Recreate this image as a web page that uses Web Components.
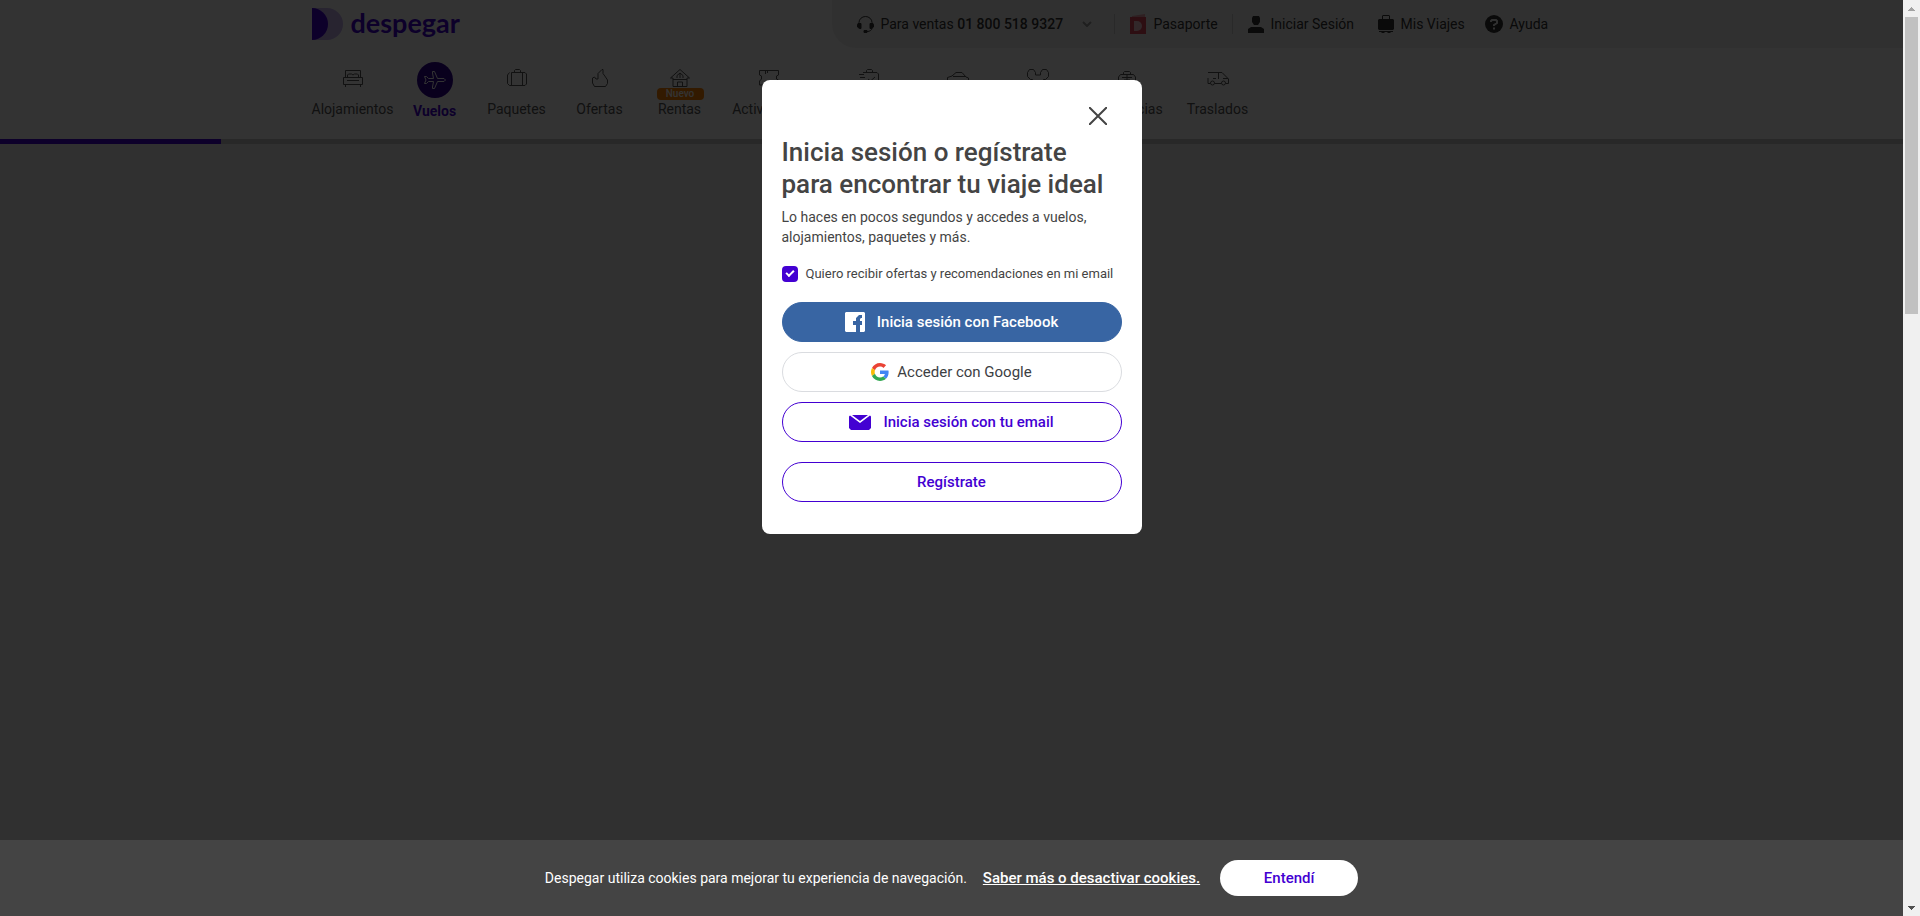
<!DOCTYPE html>
<html lang="es">
<head>
<meta charset="utf-8">
<title>Despegar - Vuelos</title>
<style>
  html, body { margin: 0; }
  body { font-family: Roboto, "Liberation Sans", sans-serif; font-size: 14px; line-height: 20px; color: #444; background: #f0f0f0; }
</style>
</head>
<body>
<app-window>
  <site-header>
    <site-brand slot="brand"></site-brand>
    <utility-bar slot="utility"></utility-bar>
    <product-nav slot="nav"></product-nav>
  </site-header>
  <login-dialog slot="dialog"></login-dialog>
  <cookie-bar slot="footer"></cookie-bar>
</app-window>

<script>
const BASE = `:host, *, *::before { box-sizing: border-box; } a { color: inherit; text-decoration: none; } button { font: inherit; color: inherit; cursor: pointer; margin: 0; padding: 0; border: 0; background: none; } svg { display: block; flex: none; }`;

function define(name, css, html) {
  const template = document.createElement('template');
  template.innerHTML = `<style>${BASE}${css}</style>${html}`;
  customElements.define(name, class extends HTMLElement {
    constructor() {
      super();
      this.attachShadow({ mode: 'open' }).append(template.content.cloneNode(true));
    }
  });
}

const line = (w, h, body) => `<svg width="${w}" height="${h}" viewBox="0 0 ${w} ${h}" fill="none" stroke="currentColor" stroke-width="1" aria-hidden="true">${body}</svg>`;
const solid = (w, h, body) => `<svg width="${w}" height="${h}" viewBox="0 0 ${w} ${h}" fill="currentColor" aria-hidden="true">${body}</svg>`;

define('scroll-rail', `
  :host { display: flex; flex-direction: column; align-items: center; width: 17px; height: 100vh; position: sticky; top: 0; background: #f0f0f0; }
  .end { display: grid; place-items: center; height: 17px; width: 17px; }
  .thumb { flex: 297; width: 13px; background: #c1c1c1; }
  .rest { flex: 585; }
`, `
  <div class="end">${solid(7, 4, '<path fill="#a3a3a3" d="M3 0h1v1h1v1h1v1h1v1H0V3h1V2h1V1h1z"/>')}</div>
  <div class="thumb"></div><div class="rest"></div>
  <div class="end">${solid(7, 4, '<path fill="#505050" d="M0 0h7v1H6v1H5v1H4v1H3V3H2V2H1V1H0z"/>')}</div>
`);

define('app-window', `
  :host { display: flex; min-height: 100vh; }
  .view { flex: 1; display: flex; flex-direction: column; min-width: 0; }
  .stage { flex: 1; position: relative; }
  .shade { position: absolute; inset: 0; display: flex; justify-content: center; align-items: flex-start; padding-top: 80px; background: rgba(0, 0, 0, .8); }
`, `
  <div class="view">
    <div class="stage"><slot></slot><div class="shade"><slot name="dialog"></slot></div></div>
    <slot name="footer"></slot>
  </div>
  <scroll-rail></scroll-rail>
`);

define('site-header', `
  :host { display: block; background: #fff; }
  .top { display: grid; grid-template-columns: 1fr 1280px 1fr; height: 48px; }
  .inner { grid-column: 2; display: flex; justify-content: space-between; }
  .fill { background: #f1f1f1; }
  .nav { display: grid; grid-template-columns: 1fr 1280px 1fr; height: 91px; }
  ::slotted(product-nav) { grid-column: 2; }
  .track { display: flex; height: 5px; background: #c8c8c8; }
  .done { flex: 221; background: #4300d2; }
  .left { flex: 1682; }
`, `
  <div class="top"><div class="inner"><slot name="brand"></slot><slot name="utility"></slot></div><div class="fill"></div></div>
  <div class="nav"><slot name="nav"></slot></div>
  <div class="track"><div class="done"></div><div class="left"></div></div>
`);

define('site-brand', `
  :host { display: flex; align-items: center; }
  a { display: flex; align-items: center; gap: 8px; color: #4300d2; font: 700 27px/32px Lato, sans-serif; }
  span { padding-bottom: 2px; }
`, `
  <a href="#">
    ${solid(31, 32, '<path opacity=".3" d="M0 0h15a16 16 0 0 1 0 32H0z"/><path d="M0 0a16 16 0 0 1 0 32z"/>')}
    <span>despegar</span>
  </a>
`);

define('utility-bar', `
  :host { display: grid; grid-template-columns: 257px 16px 102px 16px 130px 107px 88px; align-items: center; width: 760px; height: 48px; padding-left: 25px; background: #f1f1f1; border-bottom-left-radius: 24px; color: #333; }
  a { display: flex; align-items: center; gap: 7px; white-space: nowrap; }
  b { font-weight: 500; }
  .chev { margin-left: 12px; color: #999; }
  i { width: 1px; height: 20px; background: #ccc; }
`, `
  <a href="#">${line(17, 17, '<path d="M2 8V6.500a6.500 6 0 0 1 13 0V12c0 2-2 3.500-5 3.500"/><path fill="currentColor" d="M1 7.500h3v5H2.500L.5 11V8.500zM16 7.500h-3v5h1.500l2-1.500V8.500zM7 14.500h3v2H7z"/>')}<span>Para ventas <b>01 800 518 9327</b></span><span class="chev">${line(10, 6, '<path stroke-width="2" d="m1 1 4 4 4-4"/>')}</span></a>
  <i></i>
  <a href="#">${solid(17, 22, '<path fill="#e8a0aa" d="m2 3 13-2v4H2z"/><path fill="#e0455a" d="M0 4h16v17H0z"/><path fill="#f7c8d0" d="M4 8h3a5 5 0 0 1 0 10H4z"/>')}Pasaporte</a>
  <i></i>
  <a href="#">${solid(16, 18, '<path d="M5 1h6l1 2v4l-2 3H6L4 7V3zM0 18v-4l3-2h10l3 2v4z"/>')}Iniciar Sesión</a>
  <a href="#">${solid(16, 18, '<path d="M4 4V1l1-1h6l1 1v3h3l1 1v9l-1 1H1l-1-1V5l1-1zM5 4h6V1H5zM1 16h14v1h-2l-1 1h-2l-1-1H7l-1 1H4l-1-1H1z" fill-rule="evenodd"/>')}Mis Viajes</a>
  <a href="#">${solid(18, 18, '<circle cx="9" cy="9" r="9"/><path fill="none" stroke="#f1f1f1" stroke-width="2" d="M6 7V6l1-1h4l1 1v2l-3 2v1M9 12.500v2"/>')}Ayuda</a>
`);

const products = [
  ['Alojamientos', line(20, 18, '<path d="M2.500 8V1.500h15V8M.5 8.500h19v7H.5zM2.500 15.500V18M17.500 15.500V18M4 11.500h12M4.500 8V6l1-1h3l1.500 1 1.500-1h3l1 1v2"/>')],
  ['Vuelos', line(22, 18, '<path stroke="#fff" d="M.5 5.500h2l2 2h5L8.500 2V.5h2l3 7H20l1.500 1.500L20 10.500h-6.500l-3 7h-2V16l1-5.500h-5l-2 2h-2L2 9z"/>')],
  ['Paquetes', line(20, 18, '<path d="M7.500 3V1.500l1-1h4l1 1V3M4.500 3.500H18l1.500 1.500v10L18 16.500H5L4.500 16zM15.500 3.500v13M2.500 3.500l-2 2.500v8.500l2 2h3"/>')],
  ['Ofertas', line(16, 18, '<path d="M2.500 17.500.5 14V9l2-1 1.500 2h2V4.500l4-4h1v4L13.500 8l2 3v3.500l-2 3z"/>')],
  ['Rentas', line(20, 18, '<path d="M.5 9 10 .5 19.500 9H17v8.500H3V9zM3 10.500h14M7.500 17v-4h5v4M7 9V6.500L10 4l3 2.500V9M10 4v5"/>')],
  ['Actividades', line(20, 18, '<path d="M.5 1.500h19V6l-2 1v3l2 1v5H.5v-4l2-2V7l-2-1zM6.500 2v3M8.500 2v2"/>')],
  ['Escapadas', line(20, 18, '<path d="M7.500 3V1.500l1-1h4l1 1V3M4 3.500h14l1.500 1.500v10L18 16.500H5M0 5.500h5M1 8.500h5M9 10l2.500 2L16 8"/>')],
  ['Autos', line(22, 18, '<path d="M.5 12V8.500L5 7l4-3.500h6L19 8l2.500 1v5H.5V12M6 7.500h13"/>')],
  ['Disney', line(22, 18, '<path d="M5.500 10.500h-2l-3-3v-4l2-3h4l2 3V6h5V3.500l2-3h4l2 3v4l-3 3h-2l-2 6h-7z"/>')],
  ['Asistencias', line(18, 18, '<path d="M5.500 5V3.500l1-1h5l1 1V5M.5 12V8l2-2.500h13l2 2.500v8H.5zM4 8.500h10M9 6v8M6 11h6"/>')],
  ['Traslados', line(22, 18, '<path d="M1 3.500h14L21.500 10v4.500H19M1 9v5.500h2M8 14.500h6M11.500 4v6M16 9.500h5M6 9.500h3"/><circle cx="5.500" cy="14" r="2"/><circle cx="16.500" cy="14" r="2"/>')]
];

define('product-nav', `
  :host { display: block; }
  nav { display: grid; grid-template-columns: 82px 82px 82px 84px 76px 102px 98px 80px 80px 98px 84px; padding-top: 14px; }
  a { display: grid; grid-template-rows: 32px 30px; justify-items: center; align-items: center; position: relative; color: #555; white-space: nowrap; }
  .icon { display: grid; place-items: center; width: 36px; height: 32px; }
  .active { grid-template-rows: 36px 26px; color: #4300d2; font-weight: 700; }
  .active .icon { height: 36px; border-radius: 50%; background: #2d0090; }
  .badge { position: absolute; top: 26px; left: 15px; width: 47px; height: 12px; border-radius: 4px; background: #ff8000; color: #fff; font-size: 10px; font-weight: 500; line-height: 12px; text-align: center; }
`, `<nav>${products.map(([label, icon]) => `<a href="#"${label === 'Vuelos' ? ' class="active"' : ''}><span class="icon">${icon}</span>${label === 'Rentas' ? '<span class="badge">Nuevo</span>' : ''}<span>${label}</span></a>`).join('')}</nav>`);

define('pill-button', `
  :host { display: block; }
  button { display: flex; align-items: center; justify-content: center; gap: 12px; width: 100%; height: 40px; border: 1px solid #4300d2; border-radius: 20px; color: #4300d2; font-size: 15px; font-weight: 500; line-height: 20px; }
  :host([kind=facebook]) button { background: #3865a3; border-color: #3865a3; color: #fff; }
  :host([kind=google]) button { border-color: #dadce0; color: #3c4043; font-weight: 400; gap: 8px; }
`, `<button type="button"><slot name="icon"></slot><span><slot></slot></span></button>`);

define('login-dialog', `
  :host { display: block; width: 380px; padding: 20px 20px 32px; border-radius: 8px; background: #fff; color: #444; }
  .bar { display: flex; justify-content: flex-end; height: 36px; padding: 7px 15px 0 0; }
  .close { width: 18px; height: 18px; }
  h2 { margin: 0; font-size: 26px; line-height: 32px; font-weight: 500; }
  p { margin: 7px 0 19px; }
  label { display: flex; align-items: center; gap: 8px; height: 16px; font-size: 13px; line-height: 16px; white-space: nowrap; }
  input { appearance: none; margin: 0; width: 16px; height: 16px; border-radius: 4px; display: grid; place-items: center; background: #4300d2; }
  input:checked::before { content: ""; width: 8px; height: 5px; border: solid #fff; border-width: 0 0 2px 2px; transform: rotate(-45deg); margin-bottom: 3px; }
  .actions { display: grid; gap: 10px; margin-top: 20px; }
  .join { margin-top: 10px; }
`, `
  <div class="bar"><button class="close" type="button" aria-label="Cerrar">${line(18, 18, '<path stroke-width="2" d="m0 0 18 18M18 0 0 18"/>')}</button></div>
  <h2>Inicia sesión o regístrate<br>para encontrar tu viaje ideal</h2>
  <p>Lo haces en pocos segundos y accedes a vuelos,<br>alojamientos, paquetes y más.</p>
  <label><input type="checkbox" checked>Quiero recibir ofertas y recomendaciones en mi email</label>
  <div class="actions">
    <pill-button kind="facebook"><svg slot="icon" width="20" height="20" viewBox="0 0 20 20" aria-hidden="true"><path fill="#fff" d="M1 0h18l1 1v18l-1 1h-4v-7h2V9h-2V7l1-1h1V3h-3l-3 3v3H8v4h3v7H1l-1-1V1z"/></svg>Inicia sesión con Facebook</pill-button>
    <pill-button kind="google"><svg slot="icon" width="18" height="18" viewBox="0 0 48 48" aria-hidden="true"><path fill="#EA4335" d="M24 9.500c3.540 0 6.710 1.220 9.210 3.600l6.850-6.850C35.900 2.380 30.470 0 24 0 14.620 0 6.510 5.380 2.560 13.220l7.980 6.190C12.430 13.720 17.740 9.500 24 9.500z"/><path fill="#4285F4" d="M46.980 24.550c0-1.570-.15-3.090-.38-4.550H24v9.020h12.940c-.58 2.960-2.260 5.480-4.780 7.180l7.730 6c4.510-4.180 7.090-10.360 7.090-17.650z"/><path fill="#FBBC05" d="M10.530 28.590c-.48-1.450-.76-2.990-.76-4.590s.27-3.140.76-4.590l-7.980-6.190C.92 16.460 0 20.120 0 24c0 3.880.92 7.540 2.560 10.780l7.970-6.190z"/><path fill="#34A853" d="M24 48c6.480 0 11.930-2.130 15.890-5.810l-7.730-6c-2.150 1.450-4.920 2.300-8.160 2.300-6.260 0-11.570-4.220-13.470-9.910l-7.980 6.190C6.510 42.620 14.620 48 24 48z"/></svg>Acceder con Google</pill-button>
    <pill-button><svg slot="icon" width="22" height="16" viewBox="0 0 22 16" aria-hidden="true"><path fill="#4300d2" d="M3 1h16l-8 6zM1 1.500 11 9l10-7.500 1 1V14l-2 2H2l-2-2V2.500z"/></svg>Inicia sesión con tu email</pill-button>
    <pill-button class="join">Regístrate</pill-button>
  </div>
`);

define('cookie-bar', `
  :host { display: flex; align-items: center; justify-content: center; height: 76px; background: #444; color: #fff; white-space: nowrap; }
  a { margin-left: 16px; font-size: 15px; font-weight: 500; text-decoration: underline; }
  button { margin-left: 20px; width: 138px; height: 36px; border-radius: 18px; background: #fff; color: #4300d2; font-size: 15px; font-weight: 500; }
`, `<span>Despegar utiliza cookies para mejorar tu experiencia de navegación.</span><a href="#">Saber más o desactivar cookies.</a><button type="button">Entendí</button>`);
</script>
</body>
</html>
